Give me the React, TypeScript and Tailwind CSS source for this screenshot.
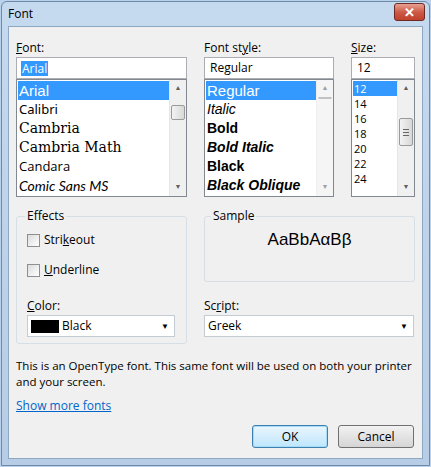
import React from "react";

const ui = { fontFamily: '"Open Sans", "Noto Sans", sans-serif' };

const ScrollBar = ({ thumbTop, thumbH, grip }: { thumbTop: number; thumbH: number; grip?: boolean }) => (
  <div className="w-[17px] h-full bg-[#f0f0f0] flex flex-col items-center border-l border-[#e6e6e6]">
    <div className="h-[17px] flex items-center justify-center text-[7px] text-[#606060]">▲</div>
    <div className="flex-1 w-full px-[1px]">
      <div
        className="w-full rounded-[2px] border border-[#9a9a9a] bg-gradient-to-r from-[#f3f3f3] to-[#d8d8d8] flex flex-col items-center justify-center gap-[2px]"
        style={{ marginTop: thumbTop, height: thumbH }}
      >
        {grip && (
          <>
            <div className="w-[6px] h-px bg-[#666]" />
            <div className="w-[6px] h-px bg-[#666]" />
            <div className="w-[6px] h-px bg-[#666]" />
          </>
        )}
      </div>
    </div>
    <div className="h-[17px] flex items-center justify-center text-[7px] text-[#606060]">▼</div>
  </div>
);

const Label = ({ pre, u, post }: { pre?: string; u: string; post: string }) => (
  <div className="text-[12px] text-black h-[15px] leading-[15px] mb-[2px]">
    {pre}
    <span className="underline">{u}</span>
    {post}
  </div>
);

const Combo = ({ children, w }: { children: React.ReactNode; w: string }) => (
  <div className={`${w} h-[22px] bg-white border border-[#c5cbd2] flex items-center px-[3px] text-[12px]`}>
    <div className="flex-1 flex items-center gap-[3px]">{children}</div>
    <span className="text-[8px] mr-[2px]">▼</span>
  </div>
);

export default function App() {
  return (
    <div className="w-[431px] h-[467px] bg-[#b9d1ea] p-[1px]" style={ui}>
      <div className="w-full h-full border border-[#6d8aa8] rounded-t-[6px] bg-gradient-to-b from-[#c5d9ef] to-[#b7cde5] flex flex-col">
        <div className="h-[24px] flex items-center justify-between pl-[6px] pr-[4px]">
          <span className="text-[12px] text-black">Font</span>
          <div className="w-[31px] h-[18px] rounded-[3px] border border-[#6b2a22] bg-gradient-to-b from-[#e8a193] via-[#cd5a48] to-[#c0402c] flex items-center justify-center text-white text-[13px] font-bold leading-none mt-[-4px]">
            ✕
          </div>
        </div>
        <div className="flex-1 mx-[6px] mb-[6px] bg-[#f0f0f0] border border-[#8ea7c2] px-[7px] pt-[13px] flex flex-col">
          <div className="flex gap-[17px]">
            <div className="w-[171px]">
              <Label u="F" post="ont:" />
              <div className="h-[22px] border border-[#abadb3] bg-white flex items-center px-[4px]">
                <span className="bg-[#3399ff] text-white text-[12px] leading-[15px] px-[1px]">Arial</span>
              </div>
              <div className="h-[118px] border border-[#828790] bg-white flex">
                <div className="flex-1 pt-[1px] pl-[1px] overflow-hidden">
                  <div className="h-[19px] bg-[#3399ff] text-white text-[15px] leading-[19px] pl-[1px]" style={{ fontFamily: '"Liberation Sans"' }}>Arial</div>
                  <div className="h-[19px] text-[13px] leading-[19px] pl-[1px]" style={{ fontFamily: '"Noto Sans"' }}>Calibri</div>
                  <div className="h-[19px] text-[14px] leading-[19px] pl-[1px]" style={{ fontFamily: '"DejaVu Serif"' }}>Cambria</div>
                  <div className="h-[19px] text-[14px] leading-[19px] pl-[1px]" style={{ fontFamily: '"DejaVu Serif"' }}>Cambria Math</div>
                  <div className="h-[19px] text-[13px] leading-[19px] pl-[1px]" style={{ fontFamily: '"Open Sans"' }}>Candara</div>
                  <div className="h-[19px] text-[14px] leading-[19px] pl-[1px] italic" style={{ fontFamily: '"Lato"' }}>Comic Sans MS</div>
                </div>
                <ScrollBar thumbTop={8} thumbH={15} />
              </div>
            </div>
            <div className="w-[130px]">
              <Label pre="Font st" u="y" post="le:" />
              <div className="h-[22px] border border-[#abadb3] bg-white flex items-center px-[5px] text-[12px]">Regular</div>
              <div className="h-[118px] border border-[#828790] bg-white flex" style={{ fontFamily: '"Liberation Sans"' }}>
                <div className="flex-1 pt-[1px] pl-[1px] overflow-hidden">
                  <div className="h-[19px] bg-[#3399ff] text-white text-[15px] leading-[19px] pl-[1px]">Regular</div>
                  <div className="h-[19px] text-[14px] leading-[19px] pl-[1px] italic">Italic</div>
                  <div className="h-[19px] text-[14px] leading-[19px] pl-[1px] font-bold">Bold</div>
                  <div className="h-[19px] text-[14px] leading-[19px] pl-[1px] font-bold italic">Bold Italic</div>
                  <div className="h-[19px] text-[14px] leading-[19px] pl-[1px] font-black">Black</div>
                  <div className="h-[19px] text-[14px] leading-[19px] pl-[1px] font-black italic whitespace-nowrap">Black Oblique</div>
                </div>
                <div className="opacity-60 h-full"><ScrollBar thumbTop={0} thumbH={0} /></div>
              </div>
            </div>
            <div className="w-[64px]">
              <Label u="S" post="ize:" />
              <div className="h-[22px] border border-[#abadb3] bg-white flex items-center px-[5px] text-[12px]">12</div>
              <div className="h-[118px] border border-[#828790] bg-white flex">
                <div className="flex-1 pt-[1px] pl-[1px] overflow-hidden text-[11px]">
                  <div className="h-[15px] bg-[#3399ff] text-white leading-[15px] pl-[1px]">12</div>
                  {["14", "16", "18", "20", "22", "24"].map((s) => (
                    <div key={s} className="h-[15px] leading-[15px] pl-[1px]">{s}</div>
                  ))}
                </div>
                <ScrollBar thumbTop={21} thumbH={28} grip />
              </div>
            </div>
          </div>

          <div className="flex gap-[17px] mt-[16px]">
            <fieldset className="w-[171px] h-[137px] border border-[#d5dfe5] rounded-[3px] px-[10px] pt-[8px] mt-[-6px]">
              <legend className="text-[12px] px-[2px] ml-[-2px]">Effects</legend>
              <div className="flex items-center gap-[4px] text-[12px] h-[14px]">
                <div className="w-[13px] h-[13px] border border-[#8f8f8f] bg-gradient-to-br from-[#dcdcdc] to-white" />
                <span>Stri<span className="underline">k</span>eout</span>
              </div>
              <div className="flex items-center gap-[4px] text-[12px] h-[14px] mt-[16px]">
                <div className="w-[13px] h-[13px] border border-[#8f8f8f] bg-gradient-to-br from-[#dcdcdc] to-white" />
                <span><span className="underline">U</span>nderline</span>
              </div>
              <div className="mt-[21px]"><Label u="C" post="olor:" /></div>
              <Combo w="w-[148px]">
                <div className="w-[28px] h-[13px] bg-black" />
                <span>Black</span>
              </Combo>
            </fieldset>
            <div className="w-[211px] flex flex-col">
              <fieldset className="h-[75px] border border-[#d5dfe5] rounded-[3px] px-[8px] mt-[-6px] flex items-center justify-center">
                <legend className="text-[12px] px-[2px] ml-[-2px]">Sample</legend>
                <span className="text-[17px] mt-[2px]" style={{ fontFamily: '"Liberation Sans"' }}>AaBbAαBβ</span>
              </fieldset>
              <div className="mt-[16px]"><Label pre="Sc" u="r" post="ipt:" /></div>
              <Combo w="w-[210px]"><span>Greek</span></Combo>
            </div>
          </div>

          <div className="text-[11.5px] leading-[16px] mt-[14px] w-[405px]">
            This is an OpenType font. This same font will be used on both your printer and your screen.
          </div>
          <div className="text-[12px] text-[#0066cc] underline mt-[7px]">Show more fonts</div>

          <div className="flex justify-end gap-[10px] mt-[10px] pr-[1px]">
            <div className="w-[76px] h-[23px] rounded-[3px] border border-[#3c7fb1] bg-gradient-to-b from-[#eaf6fd] to-[#bee6fd] flex items-center justify-center text-[12px] shadow-[inset_0_0_0_1px_#a8dcf5]">OK</div>
            <div className="w-[76px] h-[23px] rounded-[3px] border border-[#707070] bg-gradient-to-b from-[#f2f2f2] to-[#d5d5d5] flex items-center justify-center text-[12px]">Cancel</div>
          </div>
        </div>
      </div>
    </div>
  );
}
